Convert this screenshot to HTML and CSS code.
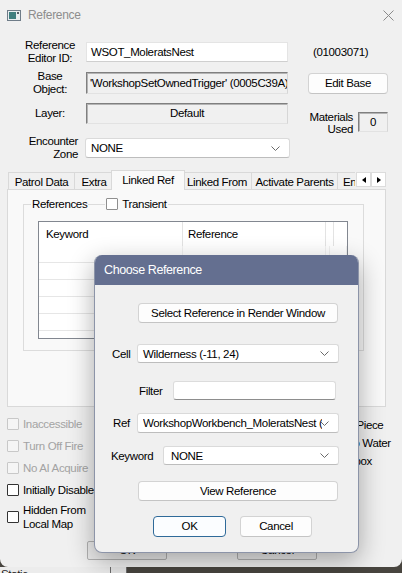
FILE: index.html
```html
<!DOCTYPE html>
<html lang="en">
  <head>
    <meta charset="UTF-8" />
    <meta name="viewport" content="width=device-width, initial-scale=1.0" />
    <title>Reference</title>
    <link rel="stylesheet" href="styles.css">
  </head>
  <body>
    <div class="screen">
      <div class="window">
        <!-- title bar -->
        <div class="titlebar">
          <svg class="app-icon" width="14" height="11" viewBox="0 0 14 11">
            <rect x="0.5" y="0.5" width="13" height="10" fill="#e9eef1" stroke="#6f7c88" />
            <rect x="2" y="2" width="7" height="7" fill="#3f7f80" />
            <rect x="10" y="2" width="2" height="2" fill="#55606a" />
          </svg>
          <span class="title">Reference</span>
          <svg class="close" width="11" height="11" viewBox="0 0 11 11">
            <path d="M0.5 0.5 L10.5 10.5 M10.5 0.5 L0.5 10.5" stroke="#8a8a8a" stroke-width="1" />
          </svg>
        </div>

        <!-- header fields -->
        <div class="form">
          <div class="row row-id">
            <div class="label">Reference<br />Editor ID:</div>
            <div class="edit">WSOT_MoleratsNest</div>
            <div class="form-id">(01003071)</div>
          </div>
          <div class="row row-base">
            <div class="label">Base<br />Object:</div>
            <div class="inset base-field">'WorkshopSetOwnedTrigger' (0005C39A)</div>
            <div class="btn edit-base">Edit Base</div>
          </div>
          <div class="row row-layer">
            <div class="label single">Layer:</div>
            <div class="inset layer-field">Default</div>
            <div class="materials">
              <div class="mat-label">Materials<br />Used</div>
              <div class="inset mat-box">0</div>
            </div>
          </div>
          <div class="row row-zone">
            <div class="label right">Encounter<br />Zone</div>
            <div class="combo zone-combo">
              <span>NONE</span>
              <svg class="chev" width="9" height="5" viewBox="0 0 9 5"><polyline points="0.5,0.5 4.5,4.5 8.5,0.5" fill="none" stroke="#6a6a6a" /></svg>
            </div>
          </div>
        </div>

        <!-- tabs -->
        <div class="tabbar">
          <div class="tab" style="width: 66px">Patrol Data</div>
          <div class="tab" style="width: 39px">Extra</div>
          <div class="tab active" style="width: 74px">Linked Ref</div>
          <div class="tab" style="width: 68px">Linked From</div>
          <div class="tab" style="width: 86px">Activate Parents</div>
          <div class="tab clipped" style="width: 18px">Enable Parent</div>
          <div class="tab-scroll">
            <div class="arrow"><span class="tri left"></span></div>
            <div class="arrow"><span class="tri right"></span></div>
          </div>
        </div>

        <div class="page">
          <div class="group">
            <div class="legend">
              <span class="legend-part">References</span>
              <span class="legend-part transient">
                <span class="check"></span>
                <span>Transient</span>
              </span>
            </div>
            <div class="listview">
              <div class="lv-head">
                <div class="lv-col">Keyword</div>
                <div class="lv-col second">Reference</div>
                <div class="lv-col narrow"></div>
                <div class="lv-col last"></div>
              </div>
              <div class="lv-row"><div></div><div></div><div></div><div></div></div>
              <div class="lv-row"><div></div><div></div><div></div><div></div></div>
              <div class="lv-row"><div></div><div></div><div></div><div></div></div>
              <div class="lv-row"><div></div><div></div><div></div><div></div></div>
              <div class="lv-row"><div></div><div></div><div></div><div></div></div>
            </div>
          </div>
        </div>

        <!-- flags -->
        <div class="flags">
          <div class="flag-col">
            <div class="flag disabled"><span class="check"></span><span>Inaccessible</span></div>
            <div class="flag disabled"><span class="check"></span><span>Turn Off Fire</span></div>
            <div class="flag disabled"><span class="check"></span><span>No AI Acquire</span></div>
            <div class="flag"><span class="check"></span><span>Initially Disabled</span></div>
            <div class="flag tall"><span class="check"></span><span>Hidden From<br />Local Map</span></div>
          </div>
          <div class="flag-col side">
            <div class="flag"><span class="check"></span><span>Is Not Workshop Piece</span></div>
            <div class="flag"><span class="check"></span><span>Reflected By Auto Water</span></div>
            <div class="flag"><span class="check"></span><span>Ignored By Sandbox</span></div>
          </div>
        </div>

        <div class="actions">
          <div class="btn old">OK</div>
          <div class="btn old">Cancel</div>
        </div>
      </div>

      <div class="below">
        <div class="below-left">Static</div>
        <div class="below-mid"></div>
        <div class="below-rest"></div>
      </div>

      <!-- modal picker -->
      <div class="dialog">
        <div class="dlg-title">Choose Reference</div>
        <div class="dlg-body">
          <div class="btn dlg-wide first">Select Reference in Render Window</div>

          <div class="dlg-row cell-row">
            <span class="dlg-label" style="width: 25px">Cell</span>
            <div class="combo dlg-combo">
              <span>Wilderness (-11, 24)</span>
              <svg class="chev" width="9" height="5" viewBox="0 0 9 5"><polyline points="0.5,0.5 4.5,4.5 8.5,0.5" fill="none" stroke="#6a6a6a" /></svg>
            </div>
          </div>

          <div class="dlg-row filter-row">
            <span class="dlg-label" style="width: 34px">Filter</span>
            <div class="filter-input"></div>
          </div>

          <div class="dlg-row ref-row">
            <span class="dlg-label" style="width: 24px">Ref</span>
            <div class="combo dlg-combo">
              <span class="clip">WorkshopWorkbench_MoleratsNest (0100307A)</span>
              <svg class="chev" width="9" height="5" viewBox="0 0 9 5"><polyline points="0.5,0.5 4.5,4.5 8.5,0.5" fill="none" stroke="#6a6a6a" /></svg>
            </div>
          </div>

          <div class="dlg-row keyword-row">
            <span class="dlg-label" style="width: 52px">Keyword</span>
            <div class="combo keyword-combo">
              <span>NONE</span>
              <svg class="chev" width="9" height="5" viewBox="0 0 9 5"><polyline points="0.5,0.5 4.5,4.5 8.5,0.5" fill="none" stroke="#6a6a6a" /></svg>
            </div>
          </div>

          <div class="btn dlg-wide view">View Reference</div>

          <div class="dlg-actions">
            <div class="btn dlg-btn default">OK</div>
            <div class="btn dlg-btn">Cancel</div>
          </div>
        </div>
      </div>
    </div>
  </body>
</html>
```

FILE: styles.css
```css
* {
  box-sizing: border-box;
}

body {
  margin: 0;
  background: #48453f;
  font-family: "Liberation Sans", Arial, sans-serif;
  font-size: 11.5px;
  letter-spacing: -0.35px;
  color: #000;
}

.screen {
  position: relative;
  width: 402px;
  height: 573px;
  overflow: hidden;
}

/* main window */
.window {
  height: 567px;
  background: #f0f0f0;
  display: flex;
  flex-direction: column;
  border-radius: 0 0 8px 8px;
}

.titlebar {
  height: 30px;
  display: flex;
  align-items: center;
  padding: 0 8px 0 7px;
}

.app-icon {
  margin-top: 1px;
}

.title {
  margin-left: 7px;
  font-size: 12px;
  letter-spacing: -0.3px;
  color: #8d8d8d;
}

.close {
  margin-left: auto;
}

.form {
  padding: 9px 0 0 20px;
  display: flex;
  flex-direction: column;
}

.row {
  display: flex;
  align-items: center;
}

.label {
  width: 60px;
  text-align: center;
  line-height: 13px;
}

.label.single {
  height: 21px;
  line-height: 21px;
}

.label.right {
  text-align: right;
  padding-right: 2px;
}

.row-id {
  height: 26px;
}

.edit {
  margin-left: 6px;
  width: 202px;
  height: 20px;
  line-height: 18px;
  padding-left: 4px;
  background: #fff;
  border: 1px solid #e4e4e4;
  border-bottom-color: #cfcfcf;
}

.form-id {
  margin-left: 25px;
}

/* sunken read-only boxes */
.inset {
  background: #f0f0f0;
  border: 1px solid;
  border-color: #7f7f7f #d6d6d6 #e2e2e2 #7f7f7f;
  box-shadow: inset 1px 1px 0 #b4b4b4;
}

.row-base {
  height: 26px;
  margin-top: 5px;
}

.base-field {
  margin-left: 6px;
  width: 202px;
  height: 22px;
  line-height: 20px;
  padding-left: 3px;
  white-space: nowrap;
  overflow: hidden;
}

.btn {
  background: #fdfdfd;
  border: 1px solid #d3d3d3;
  border-bottom-color: #c4c4c4;
  border-radius: 4px;
  text-align: center;
  white-space: nowrap;
}

.edit-base {
  margin-left: 20px;
  width: 80px;
  height: 21px;
  line-height: 19px;
}

.row-layer {
  margin-top: 7px;
  align-items: flex-start;
}

.layer-field {
  margin-left: 6px;
  width: 202px;
  height: 21px;
  line-height: 19px;
  text-align: center;
}

.materials {
  margin-left: 20px;
  margin-top: 9px;
  width: 80px;
  display: flex;
  justify-content: flex-end;
  gap: 5px;
}

.mat-label {
  margin-top: -1px;
  text-align: right;
  line-height: 12px;
}

.mat-box {
  width: 30px;
  height: 20px;
  line-height: 18px;
  text-align: center;
}

.row-zone {
  height: 26px;
}

/* win11 style combo box */
.combo {
  display: flex;
  align-items: center;
  justify-content: space-between;
  background: #fff;
  border: 1px solid #dadada;
  border-bottom-color: #bdbdbd;
  border-radius: 3px;
  padding: 0 9px 0 5px;
  white-space: nowrap;
}

.zone-combo {
  margin-left: 5px;
  width: 205px;
  height: 20px;
}

.chev {
  flex-shrink: 0;
}

/* tab strip */
.tabbar {
  margin-top: 9px;
  margin-left: 8px;
  height: 19px;
  display: flex;
  align-items: flex-end;
}

.tab {
  height: 17px;
  line-height: 18px;
  text-align: center;
  white-space: nowrap;
  border: 1px solid #d9d9d9;
  border-bottom: none;
  border-right: none;
  background: #f0f0f0;
}

.tab.active {
  position: relative;
  z-index: 1;
  height: 20px;
  line-height: 18px;
  margin: 0 -2px -1px;
  border-right: 1px solid #d9d9d9;
  background: #f9f9f9;
}

.tab.active + .tab {
  border-left: none;
}

.tab.clipped {
  overflow: hidden;
  text-align: left;
  padding-left: 5px;
}

.tab-scroll {
  display: flex;
  margin-left: 1px;
  margin-bottom: 2px;
}

.arrow {
  width: 15px;
  height: 15px;
  background: #fff;
  border: 1px solid #dcdcdc;
  display: flex;
  align-items: center;
  justify-content: center;
}

.tri {
  width: 0;
  height: 0;
  border-top: 3px solid transparent;
  border-bottom: 3px solid transparent;
}

.tri.left {
  border-right: 4px solid #000;
}

.tri.right {
  border-left: 4px solid #000;
}

.page {
  margin-left: 7px;
  width: 379px;
  height: 218px;
  border: 1px solid #d9d9d9;
  background: #f9f9f9;
  display: flex;
  flex-direction: column;
}

.group {
  margin: 14px 0 0 15px;
  width: 341px;
  height: 147px;
  border: 1px solid #dcdcdc;
  display: flex;
  flex-direction: column;
}

.legend {
  margin-top: -8px;
  height: 14px;
  display: flex;
  align-items: center;
  padding-left: 7px;
}

.legend-part {
  background: #f9f9f9;
  padding: 0 1px;
  line-height: 14px;
}

.transient {
  margin-left: 17px;
  display: flex;
  align-items: center;
  gap: 4px;
}

.transient .check {
  border-color: #8f8f8f;
}

.listview {
  margin: 10px 0 0 14px;
  width: 310px;
  height: 118px;
  border: 1px solid #828790;
  background: #fff;
}

.lv-head,
.lv-row {
  display: grid;
  grid-template-columns: 144px 143px 4px 1fr;
}

.lv-head {
  height: 24px;
  line-height: 24px;
}

.lv-col {
  border-right: 1px solid #e3e3e3;
  padding-left: 7px;
}

.lv-col.second {
  padding-left: 5px;
}

.lv-col.last {
  border-right: none;
}

.lv-row {
  height: 17px;
  border-bottom: 1px solid #e6e6e6;
}

.lv-row div {
  border-right: 1px solid #f1f1f1;
}

/* check boxes under the tabs */
.check {
  display: inline-block;
  width: 12px;
  height: 12px;
  background: #fff;
  border: 1px solid #333;
  border-radius: 1px;
  flex-shrink: 0;
}

.flags {
  margin-top: 6px;
  display: flex;
}

.flag-col {
  width: 258px;
  padding-left: 7px;
  display: flex;
  flex-direction: column;
}

.flag-col.side {
  width: auto;
  padding-left: 0;
  margin-top: 3px;
}

.flag {
  height: 22px;
  display: flex;
  align-items: center;
  gap: 4px;
  white-space: nowrap;
}

.side .flag {
  height: 18px;
}

.flag.tall {
  height: 32px;
  line-height: 14px;
}

.flag.disabled {
  color: #a3a3a3;
}

.flag.disabled .check {
  background: #f5f5f5;
  border-color: #c8c8c8;
}

.actions {
  margin-top: 8px;
  padding-left: 87px;
  display: flex;
  gap: 70px;
}

.btn.old {
  width: 80px;
  height: 19px;
  line-height: 17px;
  background: #ebebeb;
  border-color: #b2b2b2;
  border-radius: 2px;
}

.below {
  height: 6px;
  display: flex;
  overflow: hidden;
}

.below-left {
  width: 110px;
  background: #ececec;
  padding-left: 1px;
  line-height: 14px;
  color: #222;
}

.below-mid {
  width: 17px;
  background: #e6e6e6;
  border-left: 1px solid #6d6d6d;
  border-right: 1px solid #6d6d6d;
}

.below-rest {
  flex: 1;
  background: #48453f;
}

/* Choose Reference modal */
.dialog {
  position: absolute;
  left: 94px;
  top: 255px;
  width: 265px;
  height: 298px;
  border-radius: 8px;
  overflow: hidden;
  background: #f0f0f0;
  border: 1px solid #8c94a8;
  border-top: none;
  box-shadow: 0 8px 26px rgba(0, 0, 0, 0.32);
  display: flex;
  flex-direction: column;
}

.dlg-title {
  height: 30px;
  line-height: 31px;
  padding-left: 9px;
  background: #646f90;
  color: #fff;
  font-size: 12.5px;
  letter-spacing: -0.4px;
}

.dlg-body {
  display: flex;
  flex-direction: column;
}

.dlg-wide {
  margin-left: 43px;
  width: 200px;
  height: 20px;
  line-height: 18px;
}

.dlg-wide.first {
  margin-top: 18px;
}

.dlg-wide.view {
  margin-top: 16px;
}

.dlg-row {
  display: flex;
  align-items: center;
}

.cell-row {
  margin-top: 21px;
  padding-left: 17px;
}

.filter-row {
  margin-top: 18px;
  padding-left: 44px;
}

.ref-row {
  margin-top: 13px;
  padding-left: 18px;
}

.keyword-row {
  margin-top: 13px;
  padding-left: 16px;
}

.dlg-combo {
  width: 202px;
  height: 20px;
}

.cell-row .dlg-combo {
  height: 19px;
}

.keyword-combo {
  width: 176px;
  height: 19px;
  padding-left: 7px;
}

.clip {
  overflow: hidden;
  width: 180px;
  margin-right: -2px;
}

.filter-input {
  width: 163px;
  height: 19px;
  background: #fff;
  border: 1px solid #dcdcdc;
  border-bottom-color: #8d8d8d;
  border-radius: 3px;
}

.dlg-actions {
  margin-top: 15px;
  padding-left: 58px;
  display: flex;
  gap: 14px;
}

.dlg-btn {
  width: 72px;
  height: 21px;
  line-height: 19px;
}

.dlg-btn.default {
  width: 73px;
  border-color: #2f6a99;
  background: #fbfdff;
}
```
